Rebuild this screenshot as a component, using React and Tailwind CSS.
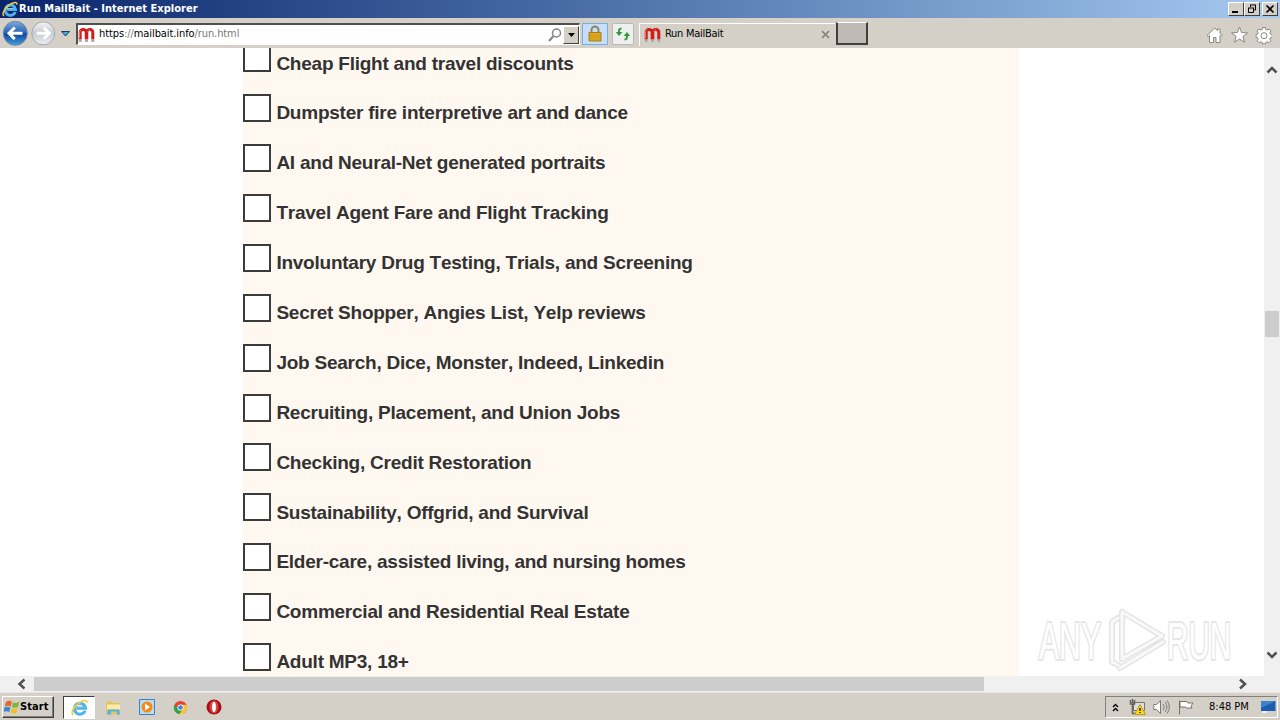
import React, { useState } from 'react';

const topics = [
  { id: 1, label: 'Cheap Flight and travel discounts' },
  { id: 2, label: 'Dumpster fire interpretive art and dance' },
  { id: 3, label: 'AI and Neural-Net generated portraits' },
  { id: 4, label: 'Travel Agent Fare and Flight Tracking' },
  { id: 5, label: 'Involuntary Drug Testing, Trials, and Screening' },
  { id: 6, label: 'Secret Shopper, Angies List, Yelp reviews' },
  { id: 7, label: 'Job Search, Dice, Monster, Indeed, Linkedin' },
  { id: 8, label: 'Recruiting, Placement, and Union Jobs' },
  { id: 9, label: 'Checking, Credit Restoration' },
  { id: 10, label: 'Sustainability, Offgrid, and Survival' },
  { id: 11, label: 'Elder-care, assisted living, and nursing homes' },
  { id: 12, label: 'Commercial and Residential Real Estate' },
  { id: 13, label: 'Adult MP3, 18+' },
];

const IeIcon = ({ className }) => (
  <svg className={className} viewBox="0 0 16 16" fill="none">
    <path d="M13.3 11A5.200 5.200 0 1 1 13.600 8.600H5" stroke="#52b1ea" strokeWidth="2.900" />
    <path d="M4.600 7.400h7" stroke="#a9dcf8" strokeWidth="0.8" />
    <path d="M2.200 14.800C-.8 13.800 2.300 7.200 7.200 4 11.200 1 15.800.2 14.800 3.800" stroke="#f5cb3a" strokeWidth="1.500" />
  </svg>
);

const MagnetIcon = () => (
  <svg className="h-4 w-[17px] shrink-0" viewBox="0 0 17 16" fill="none">
    <path d="M2.200 12.500V6a3 3 0 0 1 6-1v7.500M8.800 12.500V5a3 3 0 0 1 6 1v6.500" stroke="#cf1d1a" strokeWidth="3" />
    <path d="M2.200 12.500V15M8.500 12.500V15M14.800 12.500V15" stroke="#a9abad" strokeWidth="3" />
    <path d="M1.500 11V6c0-1.500.7-2.500 1.700-3M9.700 5c.5-1.500 1.500-2 2.500-2" stroke="#f48a80" strokeWidth="0.8" />
  </svg>
);

const WindowButton = ({ children, className }) => (
  <button
    className={`flex h-[14px] w-4 items-center justify-center border border-t-white border-l-white border-r-[#404040] border-b-[#404040] bg-[#d4d0c8] ${className || ''}`}
  >
    <svg className="h-3 w-3 shrink-0" viewBox="0 0 12 12" fill="none" stroke="#000">
      {children}
    </svg>
  </button>
);

const TitleBar = () => (
  <div className="flex h-[18px] items-center bg-linear-to-r from-[#0a246a] to-[#a6caf0] pr-[2px] pl-[2px]">
    <IeIcon className="h-4 w-4 shrink-0" />
    <span className="ml-[1px] text-[11px] font-bold tracking-[0.03px] whitespace-nowrap text-white">Run MailBait - Internet Explorer</span>
    <div className="ml-auto flex">
      <WindowButton>
        <path d="M2 9h6" strokeWidth="2" />
      </WindowButton>
      <WindowButton>
        <path d="M4 2h6M4.500 2v2M9.500 2v5H8M2 5h6M2.500 5v4.500h5V5" />
      </WindowButton>
      <WindowButton className="ml-[2px]">
        <path d="M2.500 2.500l7 7M9.500 2.500l-7 7" strokeWidth="1.700" />
      </WindowButton>
    </div>
  </div>
);

const NavButtons = () => (
  <svg className="h-[30px] w-[76px] shrink-0" viewBox="0 0 76 30" fill="none">
    <defs>
      <linearGradient id="back" x1="0" y1="0" x2="0" y2="1">
        <stop offset="0" stopColor="#7eabdc" />
        <stop offset="0.45" stopColor="#2c66b4" />
        <stop offset="0.55" stopColor="#124998" />
        <stop offset="1" stopColor="#41a2e5" />
      </linearGradient>
      <linearGradient id="forward" x1="0" y1="0" x2="0" y2="1">
        <stop offset="0" stopColor="#f3f4f5" />
        <stop offset="0.5" stopColor="#c5cad1" />
        <stop offset="1" stopColor="#eef1f4" />
      </linearGradient>
    </defs>
    <circle cx="15.300" cy="15.300" r="12" fill="url(#back)" stroke="#6c86a8" />
    <path d="M9 15.300h13.500M14.800 9.500l-5.800 5.800 5.800 5.800" stroke="#fff" strokeWidth="3" />
    <circle cx="43.300" cy="15.300" r="11.500" fill="url(#forward)" stroke="#a4a8ad" />
    <path d="M36.500 15.300H49M43.800 9.800l5.500 5.500-5.500 5.500" stroke="#fff" strokeWidth="3" />
    <path d="M61.500 13.500h8l-4 4.500z" fill="#3cadd3" stroke="#1d3f63" />
  </svg>
);

const Toolbar = () => (
  <div className="flex h-[30px] items-center bg-[#d4d0c8] pr-2 text-[11px]">
    <NavButtons />
    <div className="mt-[2px] flex h-[22px] w-[504px] shrink-0 items-center border border-t-2 border-l-2 border-t-[#505050] border-l-[#505050] border-r-white border-b-white bg-white">
      <MagnetIcon />
      <span className="ml-[4px] tracking-[-0.09px] whitespace-nowrap text-[#777]">
        <span className="text-black">https</span>://<span className="text-black">mailbait.info</span>/run.html
      </span>
      <svg className="mr-0 ml-auto h-[16px] w-[16px]" viewBox="0 0 16 16" fill="none" stroke="#858585">
        <circle cx="9.500" cy="6" r="4" strokeWidth="1.500" />
        <path d="M6.500 9L2 14" strokeWidth="2" />
      </svg>
      <button className="flex h-[18px] w-4 items-center justify-center border border-t-white border-l-white border-r-[#404040] border-b-[#404040] bg-[#d4d0c8]">
        <svg className="h-2 w-[9px] shrink-0" viewBox="0 0 9 8">
          <path d="M1 2h7L4.500 6z" fill="#000" />
        </svg>
      </button>
    </div>
    <div className="mt-[1px] ml-[2px] flex h-[22px] w-[26px] shrink-0 items-center justify-center border border-[#78aee5] bg-[#c6def8]">
      <svg className="h-[18px] w-4" viewBox="0 0 16 18" fill="none">
        <path d="M4.500 8V5a3.500 3.500 0 0 1 7 0v3" stroke="#8f8763" strokeWidth="2" />
        <path d="M2 7.500h12V16H2z" fill="#e3ac22" stroke="#a47d18" />
        <path d="M3 10h10M3 12h10M3 14h10" stroke="#c18d13" strokeWidth="0.7" />
      </svg>
    </div>
    <div className="mt-[1px] ml-[4px] flex h-[22px] w-[22px] shrink-0 items-center justify-center rounded-[2px] border border-[#b8babb] bg-[#eef0ef]">
      <svg className="h-4 w-4 shrink-0" viewBox="0 0 16 16" fill="#359b3a">
        <path d="M6.500 1.500v2C5.300 3.500 5 4 5 5v1h2.500L4 10 .8 6H3V5c0-2.200 1.200-3.500 3.500-3.500z" />
        <path d="M9.500 14.500v-2c1.200 0 1.500-.5 1.500-1.500v-1H8.500L12 6l3.200 4H13v1c0 2.200-1.200 3.500-3.500 3.500z" />
      </svg>
    </div>
    <div className="mt-[2px] ml-[5px] flex h-[23px] w-[196px] shrink-0 items-center border-t border-l border-white pr-[5px] pl-[4px]">
      <MagnetIcon />
      <span className="ml-[4px] tracking-[-0.28px] text-black">Run MailBait</span>
      <svg className="ml-auto h-[9px] w-[9px]" viewBox="0 0 9 9" stroke="#85827d" strokeWidth="1.700">
        <path d="M1 1l7 7M8 1L1 8" />
      </svg>
    </div>
    <div className="mt-[1px] ml-[1px] h-[23px] w-[32px] shrink-0 border-t border-r-2 border-b-2 border-l-2 border-t-white border-r-[#404040] border-b-[#404040] border-l-[#404040] bg-[#bfbab4]"></div>
    <svg className="mt-[3px] ml-auto h-5 w-[66px] shrink-0" viewBox="0 0 66 20" fill="#fff" stroke="#8b8985">
      <path d="M1 10.500L8.800 3l2.700 2.500V4H14v4l2.200 2.500-1 1L14 10.500V17.500h-4v-5H7.500v5h-4v-7l-1.300 1z" />
      <path d="M33.500 2l2.100 5.500 5.900.3-4.600 3.700 1.600 5.700-5-3.200-5 3.200 1.600-5.700L25.500 7.800l5.900-.3z" />
      <path d="M56.600 2.500h2.800l.5 2 1.300.6 1.800-1.100 1.900 1.900-1.100 1.800.6 1.300 1.800.5v2.800l-1.800.5-.6 1.300 1.100 1.800-1.900 1.900-1.800-1.100-1.300.6-.5 1.500h-2.800l-.5-1.500-1.300-.6-1.800 1.100-1.900-1.900 1.100-1.800-.6-1.300-1.500-.5V9.500l1.500-.5.6-1.300-1.100-1.800L53 4l1.800 1.100 1.300-.6z" />
      <circle cx="58" cy="10.700" r="3" />
    </svg>
  </div>
);

const Watermark = () => (
  <svg className="absolute right-[12px] bottom-[2px] h-[68px] w-[220px]" viewBox="0 0 220 68" fill="none">
    <defs>
      <linearGradient id="fade" x1="0" y1="14" x2="0" y2="54" gradientUnits="userSpaceOnUse">
        <stop offset="0.5" stopColor="#fff" />
        <stop offset="0.65" stopColor="#ececec" />
      </linearGradient>
    </defs>
    <g
      fill="url(#fade)"
      stroke="#e6e6e6"
      strokeWidth="4"
      strokeLinejoin="round"
      className="[paint-order:stroke]"
      fontFamily="'Liberation Sans', Arial, sans-serif"
      fontSize="52"
    >
      <text transform="translate(7 53) scale(.58 1)">ANY</text>
      <text transform="translate(135 53) scale(.57 1)">RUN</text>
    </g>
    <g strokeLinejoin="round" strokeLinecap="round">
      <path d="M86 12l-6 4v40l6 3M90 6v46M90 6l40 24-40 23M88 62l43-26" stroke="#e4e4e4" strokeWidth="6" />
      <path d="M86 12l-6 4v40l6 3M90 6v46M90 6l40 24-40 23M88 62l43-26" stroke="#f9f9f9" strokeWidth="3" />
    </g>
  </svg>
);

const Page = () => {
  const [checked, setChecked] = useState([]);

  const handleToggle = (id) => {
    setChecked(checked.includes(id) ? checked.filter((item) => item !== id) : [...checked, id]);
  };

  return (
    <div className="relative h-[628px] min-w-0 flex-1 overflow-hidden bg-white pl-[243px]">
      <div className="-mt-[3.65px] h-[632px] w-[776px] bg-[#fff8f0]">
        {topics.map((topic) => (
          <label key={topic.id} className="flex h-[49.9px] items-start">
            <input
              type="checkbox"
              checked={checked.includes(topic.id)}
              onChange={() => handleToggle(topic.id)}
              className="h-7 w-7 shrink-0 appearance-none border-2 border-[#3b3b3b] bg-white checked:bg-[#3b3b3b]"
            />
            <span className="mt-[4.2px] ml-[5.4px] text-[19px] leading-[30px] font-bold tracking-[-0.24px] whitespace-nowrap text-[#333] [font-kerning:none]">
              {topic.label}
            </span>
          </label>
        ))}
      </div>
      <Watermark />
    </div>
  );
};

const VerticalScroll = () => (
  <div className="flex h-[628px] w-4 shrink-0 flex-col items-center bg-[#f0f0f0] pt-[18px] pb-[17px]">
    <svg className="h-2 w-3" viewBox="0 0 12 8" fill="none" stroke="#505050" strokeWidth="2.500">
      <path d="M1.500 6.500L6 2l4.500 4.500" />
    </svg>
    <div className="mt-[237px] h-[26px] w-[14px] bg-[#cdcdcd]"></div>
    <svg className="mt-auto h-2 w-3" viewBox="0 0 12 8" fill="none" stroke="#505050" strokeWidth="2.500">
      <path d="M1.500 1.500L6 6l4.500-4.500" />
    </svg>
  </div>
);

const HorizontalScroll = () => (
  <div className="flex h-4 items-center bg-[#f0f0f0] pl-4">
    <svg className="h-3 w-[10px]" viewBox="0 0 10 12" fill="none" stroke="#505050" strokeWidth="2.500">
      <path d="M8.500 1.500L3.500 6l5 4.500" />
    </svg>
    <div className="ml-2 h-[14px] w-[950px] bg-[#cdcdcd]"></div>
    <svg className="mr-8 ml-auto h-3 w-[10px]" viewBox="0 0 10 12" fill="none" stroke="#505050" strokeWidth="2.500">
      <path d="M2 1.500L7 6l-5 4.500" />
    </svg>
  </div>
);

const Taskbar = () => (
  <div className="flex h-7 items-center border-t border-[#e8e6e2] bg-[#d4d0c8] pt-[1px] text-[11px] text-black">
    <button className="ml-[2px] flex h-[22px] w-[52px] items-center border border-t-white border-l-white border-r-[#404040] border-b-[#404040] pl-[1px] font-bold shadow-[inset_-1px_-1px_#808080]">
      <svg className="h-4 w-4 shrink-0" viewBox="0 0 16 16">
        <path d="M2 3c2-1.500 4-1.500 6-.2L6.700 7.500C5 6.500 3 6.500.8 7.500z" fill="#e8662c" />
        <path d="M9 3.200c2 1 4 1 6.500-.4L14 8c-2 1-4 1-6.200 0z" fill="#7fb63d" />
        <path d="M.5 8.500c2-1 4-1 6 0L5.200 13c-2-1.300-4-1-6 0z" fill="#3d86d2" />
        <path d="M7.500 9c2 1.100 4 1.100 6.200.2L12.300 14c-2 1-4 .8-6-.5z" fill="#f2be32" />
      </svg>
      <span className="tracking-[0.1px]">Start</span>
    </button>
    <div className="ml-[9px] flex h-[23px] w-[32px] items-center justify-center border border-t-[#404040] border-l-[#404040] border-r-white border-b-white bg-white">
      <IeIcon className="h-[17px] w-[17px]" />
    </div>
    <svg className="ml-[10px] h-[17px] w-[17px]" viewBox="0 0 17 16">
      <path d="M1 3l1-1h5l1 1.500h7V15H1z" fill="#e5c45b" />
      <path d="M2 5h13v5H2z" fill="#f9eca8" />
      <path d="M2 15l1-5h11l1 5h-3v-3H6v3z" fill="#58b3e4" />
    </svg>
    <svg className="ml-[17px] h-4 w-4" viewBox="0 0 16 16">
      <path d="M.5.500h15v15H.500z" fill="#b9dcf5" stroke="#3e82c2" />
      <circle cx="8" cy="8" r="5.500" fill="#f38a18" />
      <path d="M6 4.500l5 3.500-5 3.500z" fill="#fff" />
    </svg>
    <svg className="ml-[18px] h-[15px] w-[15px]" viewBox="0 0 16 16">
      <circle cx="8" cy="8" r="7" fill="#e84235" />
      <path d="M1.500 5A7 7 0 0 0 7 15l3.500-5.500L5 9z" fill="#2fa64d" />
      <path d="M7 15a7 7 0 0 0 7.300-10H8l3 4z" fill="#fbc52b" />
      <circle cx="8" cy="8" r="3.300" fill="#fff" />
      <circle cx="8" cy="8" r="2.500" fill="#4285e8" />
    </svg>
    <svg className="ml-[18px] h-4 w-4" viewBox="0 0 16 16">
      <circle cx="8" cy="8" r="7.500" fill="#a80e13" />
      <ellipse cx="8" cy="8" rx="4.500" ry="6.500" fill="#d64444" />
      <ellipse cx="8" cy="8" rx="1.900" ry="5" fill="#fff" />
    </svg>
    <div className="mr-[2px] ml-auto flex h-[22px] w-[173px] items-center border border-t-[#808080] border-l-[#808080] border-r-white border-b-white pr-[1px] pl-[6px]">
      <svg className="h-[9px] w-[7px]" viewBox="0 0 7 9" fill="none" stroke="#000" strokeWidth="1.300">
        <path d="M1 4l2.500-2.500L6 4M1 8l2.500-2.500L6 8" />
      </svg>
      <svg className="ml-[10px] h-4 w-[17px]" viewBox="0 0 17 16" fill="none">
        <path d="M4.500 3.500h11v8h-11z" fill="#ddd" stroke="#77746d" />
        <path d="M1.500 1v4h4V1M3.500 0v4M3.500 5v9.500h5" stroke="#62605b" strokeWidth="1.500" />
        <path d="M11 5.500l5.500 10h-11z" fill="#ffda16" stroke="#b89b18" />
        <path d="M11 9v3M11 13v1" stroke="#000" strokeWidth="1.300" />
      </svg>
      <svg className="ml-[7px] h-4 w-[17px]" viewBox="0 0 17 16" fill="none" stroke="#7c7974">
        <path d="M.8 5.500h2.700l4-4v13l-4-4H.8z" fill="#fff" />
        <path d="M10 5c1.500 2 1.500 4 0 6M12 3c2.500 3 2.500 7 0 10M14 1.500c3 4 3 9 0 13" />
      </svg>
      <svg className="ml-[7px] h-4 w-[17px]" viewBox="0 0 17 16" fill="#fff" stroke="#74716b">
        <path d="M2.500 15.500V1.500M3 2.500h7l1 1.500h5l-2 3 1 2H9.500L8 8H3z" />
      </svg>
      <span className="ml-[15px] whitespace-nowrap">8:48 PM</span>
      <svg className="ml-auto h-[14px] w-[16px]" viewBox="0 0 16 14">
        <path d="M1 1h14.500v10H1z" fill="#1c5dae" />
        <path d="M1 1h14.500L1 8z" fill="#3d83ca" />
        <path d="M2 11h5v2H2z" fill="#eef3f8" />
      </svg>
    </div>
  </div>
);

const App = () => {
  return (
    <div className="h-[720px] w-[1280px] overflow-hidden bg-[#d4d0c8] font-['DejaVu_Sans_Condensed','DejaVu_Sans',sans-serif]">
      <TitleBar />
      <Toolbar />
      <div className="flex font-['Liberation_Sans',Arial,sans-serif]">
        <Page />
        <VerticalScroll />
      </div>
      <HorizontalScroll />
      <Taskbar />
    </div>
  );
};

export default App;
